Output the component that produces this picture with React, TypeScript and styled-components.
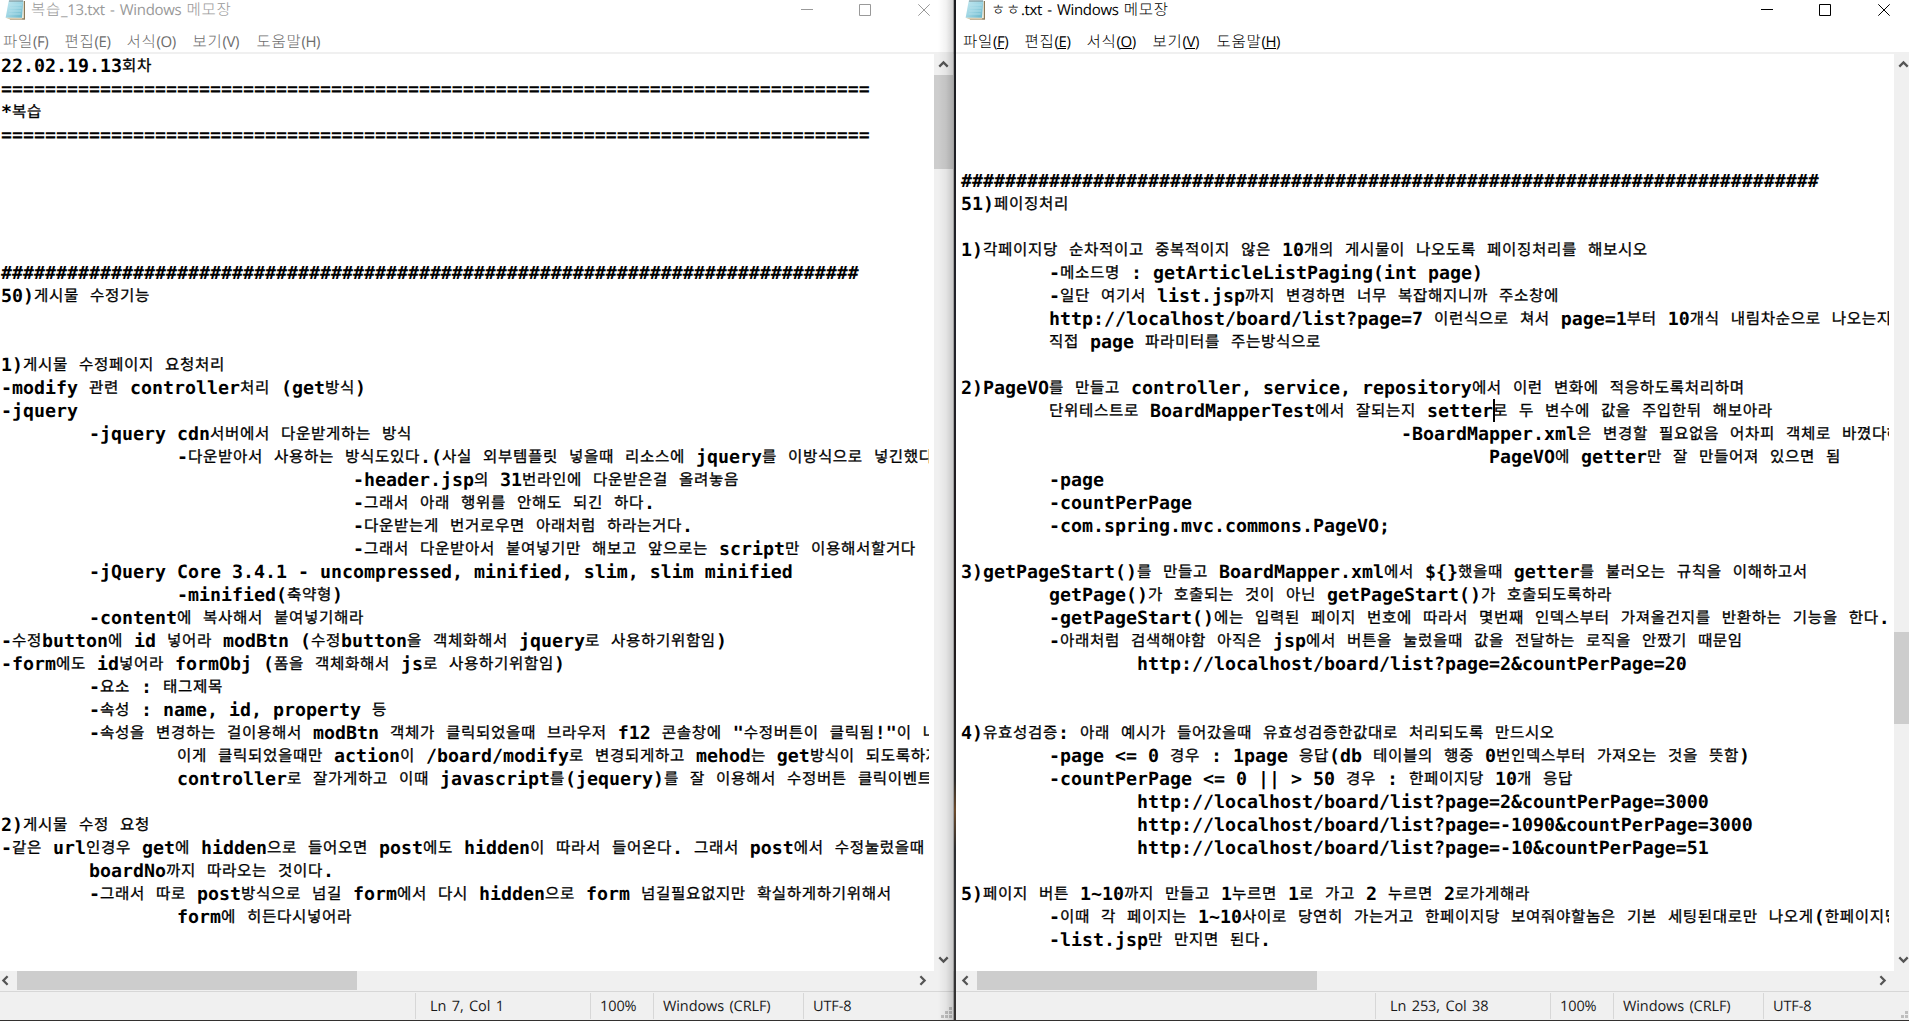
import React from 'react';
import styled, { createGlobalStyle } from 'styled-components';

const GlobalStyle = createGlobalStyle`
  * { box-sizing: border-box; }
  html, body { margin: 0; padding: 0; overflow: hidden; background: #fff; }
`;

const Desktop = styled.div`
  display: flex;
  width: 1909px;
  height: 1021px;
  overflow: hidden;
  text-rendering: geometricPrecision;
  background: linear-gradient(#1b1c20 0, #22232a 330px, #1d1719 620px, #2a2b2c 780px, #6b4a2c 810px, #2a2c30 850px, #35383c 930px, #33302f 1021px);
`;

const Window = styled.section<{ $active: boolean }>`
  position: relative;
  display: flex;
  flex-direction: column;
  flex: none;
  width: ${(p) => (p.$active ? 953 : 954)}px;
  height: 1020px;
  margin-left: ${(p) => (p.$active ? 2 : 0)}px;
  padding-left: ${(p) => (p.$active ? 4 : 0)}px;
  overflow: hidden;
  background: linear-gradient(#fff 0, #fff 52px, #f0f0f0 52px, #f0f0f0 54px, #fff 54px, #fff 971px, #f0f0f0 971px);
  --chrome: ${(p) => (p.$active ? '#000' : '#999')};
  --menu: ${(p) => (p.$active ? '#000' : '#6d6d6d')};
`;

const EdgeShade = styled.div`
  position: absolute;
  top: 0;
  right: 0;
  width: 16px;
  height: 100%;
  background: linear-gradient(to right, rgba(0, 0, 0, 0), rgba(0, 0, 0, 0.05) 50%, rgba(0, 0, 0, 0.17) 94%, rgba(0, 0, 0, 0.6) 100%);
`;

const TitleBar = styled.header`
  display: flex;
  flex: none;
  align-items: flex-start;
  width: 954px;
  height: 21px;
  padding-left: 5px;
`;

const Title = styled.h1`
  flex: 1;
  margin: 0 0 0 5px;
  font: 400 15px/20px 'Open Sans', 'Noto Sans CJK KR', sans-serif;
  letter-spacing: -0.32px;
  word-spacing: 1.6px;
  white-space: pre;
  color: var(--chrome);
`;

const Controls = styled.div`
  display: flex;
  gap: 46px;
  margin: 4px 24px 0 0;
  color: var(--chrome);
  svg { display: block; }
  svg:last-child { margin-left: 1px; }
`;

const MenuBar = styled.nav`
  display: flex;
  flex: none;
  height: 31px;
  padding: 11px 0 0 3px;
  font: 400 15px/20px 'Open Sans', 'Noto Sans CJK KR', sans-serif;
  color: var(--menu);
`;

const MenuItem = styled.span<{ $w: number }>`
  flex: none;
  width: ${(p) => p.$w}px;
  letter-spacing: -0.4px;
  white-space: pre;
`;

const Accel = styled.span<{ $on: boolean }>`
  display: inline-block;
  height: 17px;
  line-height: 20px;
  border-bottom: ${(p) => (p.$on ? '1px solid currentColor' : '0')};
  vertical-align: top;
`;

const UiHangul = styled.span`
  font-family: 'Noto Sans CJK KR', sans-serif;
  font-weight: 300;
  font-size: 15.5px;
  line-height: 1;
  letter-spacing: 0.7px;
`;

const Body = styled.div`
  display: flex;
  flex: none;
  width: 954px;
  height: 919px;
  padding-top: 2px;
`;

const Page = styled.main`
  flex: none;
  width: 929px;
  height: 917px;
  margin-right: 5px;
  padding-left: 1px;
  overflow: hidden;
  font: 700 18.27px/25px 'DejaVu Sans Mono', monospace;
  color: #000;
`;

const Line = styled.div`
  height: 23px;
  white-space: pre;
  tab-size: 88px;
`;

const Hangul = styled.span`
  position: relative;
  top: -1px;
  font-family: 'Noto Sans CJK KR', sans-serif;
  font-weight: 400;
  font-size: 15.6px;
  line-height: 1;
  letter-spacing: 0.648px;
  -webkit-text-stroke: 0.3px #000;
`;

const Caret = styled.span`
  display: inline-block;
  width: 2px;
  height: 23px;
  margin-right: -2px;
  vertical-align: top;
  background: #000;
`;

const VBar = styled.div`
  display: flex;
  flex-direction: column;
  flex: none;
  width: 19px;
  height: 917px;
  background: #f0f0f0;
`;

const HBar = styled.div`
  display: flex;
  flex: none;
  align-items: flex-start;
  width: 934px;
  height: 20px;
`;

const ArrowBox = styled.div<{ $w: number; $h: number; $end?: number }>`
  display: flex;
  flex: none;
  align-items: center;
  justify-content: center;
  width: ${(p) => p.$w}px;
  height: ${(p) => p.$h}px;
  padding-right: ${(p) => p.$end ?? 0}px;
  svg { flex: none; }
`;

const VThumb = styled.div<{ $before: number; $size: number }>`
  flex: none;
  height: ${(p) => p.$size}px;
  margin-top: ${(p) => p.$before}px;
  margin-bottom: auto;
  background: #cdcdcd;
`;

const HThumb = styled.div`
  width: 340px;
  height: 19px;
  margin-right: auto;
  background: #cdcdcd;
`;

const StatusBar = styled.footer<{ $pad: number }>`
  display: flex;
  flex: none;
  width: 960px;
  height: 29px;
  margin-left: ${(p) => -p.$pad}px;
  padding-left: ${(p) => p.$pad}px;
  border-top: 1px solid #d7d7d7;
  background: #f0f0f0;
`;

const StatusCell = styled.div<{ $w: number; $pad: number }>`
  flex: none;
  width: ${(p) => p.$w}px;
  height: 26px;
  margin-top: 1px;
  padding-left: ${(p) => p.$pad}px;
  border-left: 1px solid #d7d7d7;
  font: 400 14.5px/27px 'Open Sans', sans-serif;
  letter-spacing: -0.1px;
  word-spacing: 1.8px;
  white-space: pre;
  color: #1a1a1a;
`;

const StatusSpacer = styled.div`
  flex: none;
  width: 415px;
`;

const GripSlot = styled.div`
  flex: none;
  margin: 15px 0 0 -19px;
  svg { display: block; }
`;

const HANGUL = /([\u1100-\u11ff\u3130-\u318f\uac00-\ud7a3]+)/;

function mix(text: string, Tag: React.ElementType) {
  return text.split(HANGUL).map((part, i) => (i % 2 ? <Tag key={i}>{part}</Tag> : part));
}

type Dir = 'up' | 'down' | 'left' | 'right';
const TURN: Record<Dir, number> = { up: 0, right: 90, down: 180, left: 270 };

function Arrow({ dir }: { dir: Dir }) {
  return (
    <svg width="11" height="11" viewBox="0 0 11 11">
      <path d="M1.3 7.6 5.5 3.4 9.7 7.6" fill="none" stroke="#555" strokeWidth="2.3" transform={`rotate(${TURN[dir]} 5.5 5.5)`} />
    </svg>
  );
}

function NotepadIcon({ id }: { id: string }) {
  return (
    <svg width="21" height="21" viewBox="0 0 21 21">
      <defs>
        <linearGradient id={id} x1="0" y1="0" x2="1" y2="1">
          <stop offset="0" stopColor="#c5e9f1" />
          <stop offset="0.5" stopColor="#9dd5e3" />
          <stop offset="1" stopColor="#62b3c8" />
        </linearGradient>
      </defs>
      <path d="M5 1h15v18.7H5z" fill="#8a7a58" />
      <path d="M4 1h14.8v17.3H4z" fill="#f4efe0" />
      <path d="M3.8.6h14.6L17 17.8H.6z" fill={`url(#${id})`} />
      <path d="M5 5h12M4.6 8h12M4.2 11h12M3.6 14h12" stroke="#b9e2ec" strokeWidth="0.8" />
      <path d="M.6 17.8 17 18l.4 1.4H5z" fill="#d9ccb0" />
      <path d="M5 0v2M7 0v2M9 0v2M11 0v2M13 0v2M15 0v2M17 0v2" stroke="#77888c" strokeWidth="1" />
    </svg>
  );
}

function Grip() {
  const dots = [[8, 0], [4, 4], [8, 4], [0, 8], [4, 8], [8, 8]];
  return (
    <svg width="11" height="11">
      {dots.map(([x, y]) => (
        <rect key={`${x}-${y}`} x={x} y={y} width="3" height="3" fill="#bfbfbf" />
      ))}
    </svg>
  );
}

const MENUS: [string, string, number][] = [
  ['파일', 'F', 61.5],
  ['편집', 'E', 62],
  ['서식', 'O', 66],
  ['보기', 'V', 64],
  ['도움말', 'H', 70],
];

const CARET = '\u0001';

const LEFT_TEXT = [
  '22.02.19.13회차',
  '='.repeat(79),
  '*복습',
  '='.repeat(79),
  '', '', '', '', '',
  '#'.repeat(78),
  '50)게시물 수정기능',
  '', '',
  '1)게시물 수정페이지 요청처리',
  '-modify 관련 controller처리 (get방식)',
  '-jquery',
  '\t-jquery cdn서버에서 다운받게하는 방식',
  '\t\t-다운받아서 사용하는 방식도있다.(사실 외부템플릿 넣을때 리소스에 jquery를 이방식으로 넣긴했다',
  '\t\t\t\t-header.jsp의 31번라인에 다운받은걸 올려놓음',
  '\t\t\t\t-그래서 아래 행위를 안해도 되긴 하다.',
  '\t\t\t\t-다운받는게 번거로우면 아래처럼 하라는거다.',
  '\t\t\t\t-그래서 다운받아서 붙여넣기만 해보고 앞으로는 script만 이용해서할거다',
  '\t-jQuery Core 3.4.1 - uncompressed, minified, slim, slim minified',
  '\t\t-minified(축약형)',
  '\t-content에 복사해서 붙여넣기해라',
  '-수정button에 id 넣어라 modBtn (수정button을 객체화해서 jquery로 사용하기위함임)',
  '-form에도 id넣어라 formObj (폼을 객체화해서 js로 사용하기위함임)',
  '\t-요소 : 태그제목',
  '\t-속성 : name, id, property 등',
  '\t-속성을 변경하는 걸이용해서 modBtn 객체가 클릭되었을때 브라우저 f12 콘솔창에 "수정버튼이 클릭됨!"이 나',
  '\t\t이게 클릭되었을때만 action이 /board/modify로 변경되게하고 mehod는 get방식이 되도록하자',
  '\t\tcontroller로 잘가게하고 이때 javascript를(jequery)를 잘 이용해서 수정버튼 클릭이벤트',
  '',
  '2)게시물 수정 요청',
  '-같은 url인경우 get에 hidden으로 들어오면 post에도 hidden이 따라서 들어온다. 그래서 post에서 수정눌렀을때',
  '\tboardNo까지 따라오는 것이다.',
  '\t-그래서 따로 post방식으로 넘길 form에서 다시 hidden으로 form 넘길필요없지만 확실하게하기위해서',
  '\t\tform에 히든다시넣어라',
];

const RIGHT_TEXT = [
  '', '', '', '', '',
  '#'.repeat(78),
  '51)페이징처리',
  '',
  '1)각페이지당 순차적이고 중복적이지 않은 10개의 게시물이 나오도록 페이징처리를 해보시오',
  '\t-메소드명 : getArticleListPaging(int page)',
  '\t-일단 여기서 list.jsp까지 변경하면 너무 복잡해지니까 주소창에',
  '\thttp://localhost/board/list?page=7 이런식으로 쳐서 page=1부터 10개식 내림차순으로 나오는지',
  '\t직접 page 파라미터를 주는방식으로',
  '',
  '2)PageVO를 만들고 controller, service, repository에서 이런 변화에 적응하도록처리하며',
  '\t단위테스트로 BoardMapperTest에서 잘되는지 setter' + CARET + '로 두 변수에 값을 주입한뒤 해보아라',
  '\t\t\t\t\t-BoardMapper.xml은 변경할 필요없음 어차피 객체로 바꼈다해',
  '\t\t\t\t\t\tPageVO에 getter만 잘 만들어져 있으면 됨',
  '\t-page',
  '\t-countPerPage',
  '\t-com.spring.mvc.commons.PageVO;',
  '',
  '3)getPageStart()를 만들고 BoardMapper.xml에서 ${}했을때 getter를 불러오는 규칙을 이해하고서',
  '\tgetPage()가 호출되는 것이 아닌 getPageStart()가 호출되도록하라',
  '\t-getPageStart()에는 입력된 페이지 번호에 따라서 몇번째 인덱스부터 가져올건지를 반환하는 기능을 한다.',
  '\t-아래처럼 검색해야함 아직은 jsp에서 버튼을 눌렀을때 값을 전달하는 로직을 안짰기 때문임',
  '\t\thttp://localhost/board/list?page=2&countPerPage=20',
  '', '',
  '4)유효성검증: 아래 예시가 들어갔을때 유효성검증한값대로 처리되도록 만드시오',
  '\t-page <= 0 경우 : 1page 응답(db 테이블의 행중 0번인덱스부터 가져오는 것을 뜻함)',
  '\t-countPerPage <= 0 || > 50 경우 : 한페이지당 10개 응답',
  '\t\thttp://localhost/board/list?page=2&countPerPage=3000',
  '\t\thttp://localhost/board/list?page=-1090&countPerPage=3000',
  '\t\thttp://localhost/board/list?page=-10&countPerPage=51',
  '',
  '5)페이지 버튼 1~10까지 만들고 1누르면 1로 가고 2 누르면 2로가게해라',
  '\t-이때 각 페이지는 1~10사이로 당연히 가는거고 한페이지당 보여줘야할놈은 기본 세팅된대로만 나오게(한페이지당',
  '\t-list.jsp만 만지면 된다.',
];

function TextLine({ text }: { text: string }) {
  const [before, after] = text.split(CARET);
  return (
    <Line>
      {mix(before, Hangul)}
      {after !== undefined && <Caret />}
      {after !== undefined && mix(after, Hangul)}
    </Line>
  );
}

interface NotepadProps {
  active: boolean;
  title: string;
  lines: string[];
  position: string;
  thumbBefore: number;
  thumbSize: number;
}

function Notepad({ active, title, lines, position, thumbBefore, thumbSize }: NotepadProps) {
  return (
    <Window $active={active}>
      <TitleBar>
        <NotepadIcon id={active ? 'pad-active' : 'pad-idle'} />
        <Title>{mix(title, UiHangul)}</Title>
        <Controls>
          <svg width="12" height="12"><path d="M0 5.5h12" stroke="currentColor" /></svg>
          <svg width="12" height="12"><path d="M.5.5h11v11H.5z" fill="none" stroke="currentColor" /></svg>
          <svg width="12" height="12"><path d="M.3.3l11.4 11.4M11.7.3.3 11.7" stroke="currentColor" /></svg>
        </Controls>
      </TitleBar>
      <MenuBar>
        {MENUS.map(([label, key, w]) => (
          <MenuItem key={key} $w={w}>
            <UiHangul>{label}</UiHangul>(<Accel $on={active}>{key}</Accel>)
          </MenuItem>
        ))}
      </MenuBar>
      <Body>
        <Page>
          {lines.map((text, i) => <TextLine key={i} text={text} />)}
        </Page>
        <VBar>
          <ArrowBox $w={19} $h={21}><Arrow dir="up" /></ArrowBox>
          <VThumb $before={thumbBefore} $size={thumbSize} />
          <ArrowBox $w={19} $h={23}><Arrow dir="down" /></ArrowBox>
        </VBar>
      </Body>
      <HBar>
        <ArrowBox $w={17} $h={19} $end={6}><Arrow dir="left" /></ArrowBox>
        <HThumb />
        <ArrowBox $w={23} $h={19}><Arrow dir="right" /></ArrowBox>
      </HBar>
      <StatusBar $pad={active ? 4 : 0}>
        <StatusSpacer />
        <StatusCell $w={175} $pad={14}>{position}</StatusCell>
        <StatusCell $w={63} $pad={9}>100%</StatusCell>
        <StatusCell $w={150} $pad={9}>Windows (CRLF)</StatusCell>
        <StatusCell $w={157} $pad={9}>UTF-8</StatusCell>
        <GripSlot><Grip /></GripSlot>
      </StatusBar>
      {!active && <EdgeShade />}
    </Window>
  );
}

export default function App() {
  return (
    <>
      <GlobalStyle />
      <Desktop>
        <Notepad active={false} title="복습_13.txt - Windows 메모장" lines={LEFT_TEXT} position="Ln 7, Col 1" thumbBefore={0} thumbSize={94} />
        <Notepad active title="ㅎㅎ.txt - Windows 메모장" lines={RIGHT_TEXT} position="Ln 253, Col 38" thumbBefore={557} thumbSize={92} />
      </Desktop>
    </>
  );
}
